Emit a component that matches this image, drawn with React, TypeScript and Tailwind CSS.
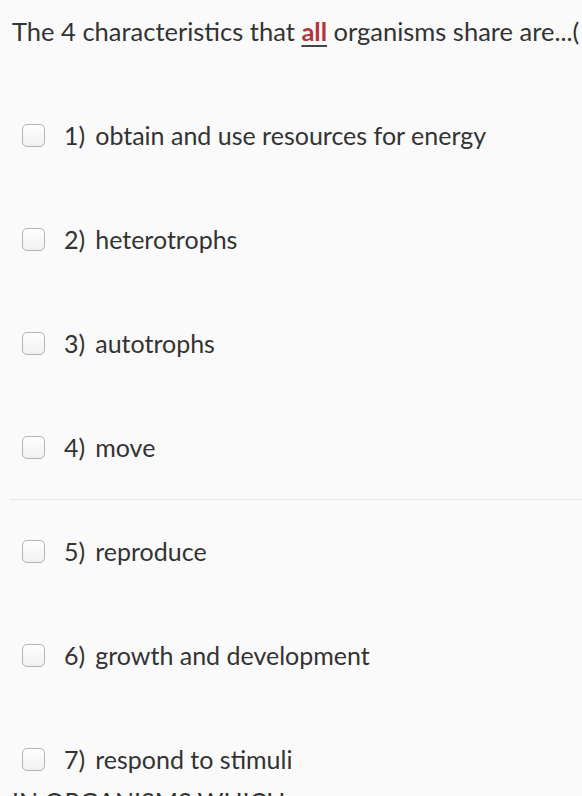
import React from 'react';

const options: { num: number; label: string }[] = [
  { num: 1, label: 'obtain and use resources for energy' },
  { num: 2, label: 'heterotrophs' },
  { num: 3, label: 'autotrophs' },
  { num: 4, label: 'move' },
  { num: 5, label: 'reproduce' },
  { num: 6, label: 'growth and development' },
  { num: 7, label: 'respond to stimuli' },
];

const Option: React.FC<{ num: number; label: string }> = ({ num, label }) => (
  <label className="flex items-center h-[60px] pl-[12px] text-[25px] leading-[30px] text-[#333] whitespace-nowrap">
    <span className="w-[23px] h-[23px] rounded-[5px] border border-[#b4b4b4] bg-gradient-to-b from-white to-[#f0f0f0]" />
    <span className="ml-[19px]">{num})</span>
    <span className="ml-[10px]">{label}</span>
  </label>
);

export default function App() {
  return (
    <div
      className="w-[582px] h-[796px] overflow-hidden bg-[#fafafa]"
      style={{ fontFamily: 'Lato, "Open Sans", sans-serif' }}
    >
      <div className="pt-[16px] px-[12px] whitespace-nowrap text-[25.5px] leading-[30px] text-[#333]">
        The 4 characteristics that{' '}
        <span className="font-bold text-[#b8323c] underline decoration-[#444] underline-offset-[4px] decoration-[2px]">all</span>{' '}
        organisms share are...(
      </div>
      <div className="mt-[59px] pl-[10px]">
        {options.slice(0, 3).map((o) => (
          <div key={o.num} className="mb-[44px]">
            <Option {...o} />
          </div>
        ))}
        <div className="mb-[22px]">
          <Option {...options[3]} />
        </div>
        <div className="border-t border-[#e6e6e6] pt-[21px]">
          {options.slice(4, 6).map((o) => (
            <div key={o.num} className="mb-[44px]">
              <Option {...o} />
            </div>
          ))}
          <Option {...options[6]} />
        </div>
      </div>
      <div className="pl-[12px] -mt-[3px] text-[25px] leading-[30px] text-[#333] whitespace-nowrap uppercase">
        In organisms which
      </div>
    </div>
  );
}
